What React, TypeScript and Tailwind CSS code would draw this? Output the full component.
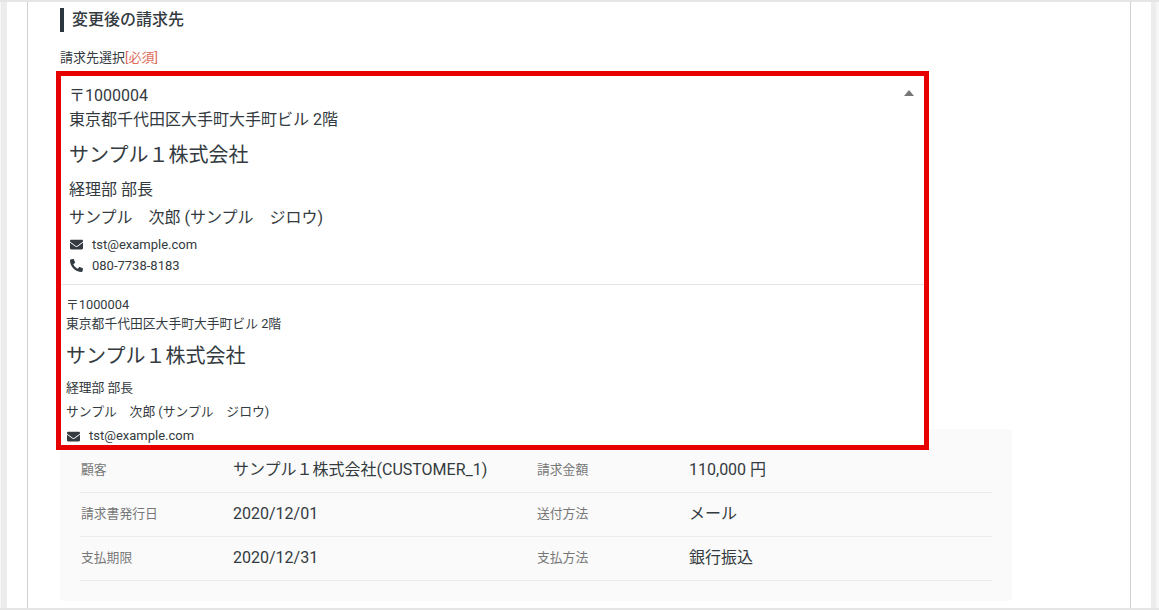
function MailIcon({ className }: { className: string }) {
  return (
    <svg viewBox="0 0 512 512" className={className} fill="currentColor">
      <path d="M502.3 190.8c3.9-3.1 9.7-.2 9.7 4.7V400c0 26.5-21.5 48-48 48H48c-26.5 0-48-21.5-48-48V195.600c0-5 5.700-7.800 9.700-4.700 22.400 17.400 52.100 39.500 154.100 113.600 21.100 15.400 56.700 47.800 92.200 47.600 35.700.3 72-32.800 92.300-47.600 102-74.100 131.600-96.300 154-113.700zM256 320c23.200.4 56.600-29.200 73.400-41.400 132.700-96.300 142.800-104.700 173.400-128.700 5.800-4.500 9.200-11.500 9.200-18.900v-19c0-26.500-21.500-48-48-48H48C21.500 64 0 85.500 0 112v19c0 7.400 3.400 14.300 9.200 18.900 30.600 23.900 40.700 32.400 173.400 128.700 16.800 12.200 50.200 41.800 73.400 41.400z" />
    </svg>
  );
}

function PhoneIcon({ className }: { className: string }) {
  return (
    <svg viewBox="0 0 512 512" className={className} fill="currentColor">
      <path d="M493.400 24.600l-104-24c-11.300-2.600-22.900 3.300-27.500 13.900l-48 112c-4.200 9.800-1.400 21.300 6.900 28l60.600 49.600c-36 76.700-98.900 140.500-177.200 177.200l-49.600-60.600c-6.800-8.300-18.200-11.100-28-6.900l-112 48C3.900 366.500-2 378.100.6 389.400l24 104C27.100 504.200 36.700 512 48 512c256.100 0 464-207.500 464-464 0-11.200-7.700-20.900-18.600-23.400z" transform="matrix(-1 0 0 1 512 0)" />
    </svg>
  );
}

function Customer({ small }: { small?: boolean }) {
  if (small) {
    return (
      <div className="pl-[5px] pt-[10px] text-[12.8px] text-[#333a40]">
        <div className="leading-[19px]">〒1000004</div>
        <div className="leading-[19px]">東京都千代田区大手町大手町ビル 2階</div>
        <div className="mt-[9px] text-[20px] leading-[28px]">サンプル１株式会社</div>
        <div className="mt-[7px] leading-[22px]">経理部 部長</div>
        <div className="leading-[22px] mt-[2px]">サンプル　次郎 (サンプル　ジロウ)</div>
        <div className="mt-[2px] flex items-center text-[13px] leading-[22px]">
          <MailIcon className="w-[13px] h-[13px] mr-[9px] ml-[1px]" />
          <span>tst@example.com</span>
        </div>
      </div>
    );
  }
  return (
    <div className="pl-[8px] pt-[8px] text-[16px] text-[#333a40]">
      <div className="leading-[24px]">〒1000004</div>
      <div className="leading-[24px]">東京都千代田区大手町大手町ビル 2階</div>
      <div className="mt-[10px] text-[20px] leading-[27px]">サンプル１株式会社</div>
      <div className="mt-[8px] leading-[26px]">経理部 部長</div>
      <div className="mt-[2px] leading-[26px]">サンプル　次郎 (サンプル　ジロウ)</div>
      <div className="mt-[3px] flex items-center text-[13px] leading-[21px]">
        <MailIcon className="w-[13px] h-[13px] mr-[9px] ml-[1px]" />
        <span>tst@example.com</span>
      </div>
      <div className="flex items-center text-[13px] leading-[21px]">
        <PhoneIcon className="w-[13px] h-[13px] mr-[9px] ml-[1px]" />
        <span>080-7738-8183</span>
      </div>
    </div>
  );
}

const rows = [
  ["顧客", "サンプル１株式会社(CUSTOMER_1)", "請求金額", "110,000 円"],
  ["請求書発行日", "2020/12/01", "送付方法", "メール"],
  ["支払期限", "2020/12/31", "支払方法", "銀行振込"],
];

export default function App() {
  return (
    <div
      className="h-[610px] overflow-hidden bg-[#f6f6f6] border-y-2 border-[#e5e5e5] pl-[1px] pr-[3px] text-[#333a40]"
      style={{ fontFamily: 'Roboto, "Noto Sans CJK JP", sans-serif' }}
    >
      <div className="h-[606px] bg-white border-l-[6px] border-r-[5px] border-[#ececec] flex px-[20px]">
        <div className="relative w-[1104px] border-x border-[#d0d0d0] pl-[32px]">
          {/* HEADER */}
          <div className="mt-[6px] border-l-[4px] border-[#2c363f] pl-[8px] h-[24px] flex items-center text-[16px] font-medium">
            変更後の請求先
          </div>

          <div className="mt-[17px] text-[13px] leading-[18px]">
            請求先選択<span className="text-[#dc6a5a]">[必須]</span>
          </div>

          {/* SELECT, open over the panel */}
          <div className="absolute left-[28px] top-[69px] w-[873px] h-[379px] border-[5px] border-[#e60000] bg-white overflow-hidden z-10">
            <div className="relative h-[209px] border-b border-[#e4e4e4]">
              <Customer />
              <div className="absolute right-[10px] top-[14px] w-0 h-0 border-x-[5px] border-b-[6px] border-x-transparent border-b-[#777]" />
            </div>
            <Customer small />
          </div>

          {/* INFO PANEL */}
          <div className="mt-[362px] w-[952px] h-[172px] bg-[#fafafa] rounded-[3px] px-[20px] pt-[20px]">
            {rows.map(([l1, v1, l2, v2]) => (
              <div key={l1} className="h-[44px] pb-[2px] border-b border-[#ececec] flex items-center">
                <div className="w-[153px] pl-[1px] text-[12.8px] text-[#777]">{l1}</div>
                <div className="w-[304px] text-[16px]">{v1}</div>
                <div className="w-[152px] text-[12.8px] text-[#777]">{l2}</div>
                <div className="text-[16px]">{v2}</div>
              </div>
            ))}
          </div>
        </div>
      </div>
    </div>
  );
}
